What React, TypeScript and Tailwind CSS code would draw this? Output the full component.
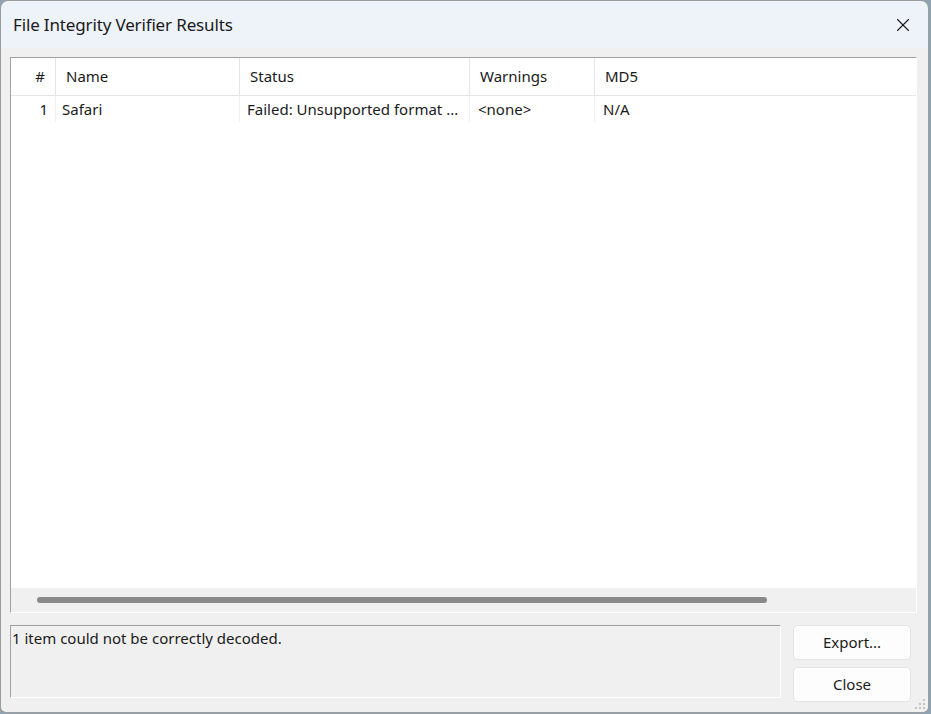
import { X } from "lucide-react"

const font = { fontFamily: '"Segoe UI", "Noto Sans", "Open Sans", sans-serif' }

const cols = [
  { label: "#", w: "w-[45px]", head: "justify-end pr-[10px]", cell: "justify-end pr-[7px]", value: "1" },
  { label: "Name", w: "w-[184px]", head: "pl-[10px]", cell: "pl-[6px]", value: "Safari" },
  { label: "Status", w: "w-[230px]", head: "pl-[10px]", cell: "pl-[7px]", value: "Failed: Unsupported format ..." },
  { label: "Warnings", w: "w-[125px]", head: "pl-[10px]", cell: "pl-[8px]", value: "<none>" },
  { label: "MD5", w: "flex-1", head: "pl-[10px]", cell: "pl-[8px]", value: "N/A" },
]

// size grip dots (bottom-right corner)
function SizeGrip() {
  return (
    <svg width="12" height="12" viewBox="0 0 12 12" className="absolute right-[2px] bottom-[2px]">
      <rect x="9" y="1" width="2" height="2" fill="#c4c4c4" />
      <rect x="5" y="5" width="2" height="2" fill="#c4c4c4" />
      <rect x="9" y="5" width="2" height="2" fill="#c4c4c4" />
      <rect x="1" y="9" width="2" height="2" fill="#c4c4c4" />
      <rect x="5" y="9" width="2" height="2" fill="#c4c4c4" />
      <rect x="9" y="9" width="2" height="2" fill="#c4c4c4" />
    </svg>
  )
}

export default function App() {
  return (
    <div className="w-[931px] h-[714px] bg-[#8fa3b3] overflow-hidden" style={font}>
      <div className="relative w-[929px] h-[713px] flex flex-col rounded-t-[8px] rounded-b-[6px] border border-[#9c9c9c] overflow-hidden">
        {/* title bar */}
        <div className="h-[47px] flex-shrink-0 bg-[#eef3f9] flex items-center justify-between pl-[12px] pr-[14px]">
          <span className="text-[17px] text-[#1a1a1a] tracking-[-0.15px]">File Integrity Verifier Results</span>
          <X size={22} strokeWidth={1.2} className="text-[#1a1a1a]" />
        </div>

        {/* body */}
        <div className="flex-1 bg-[#f0f0f0] flex flex-col pl-[9px] pr-[11px] pt-[9px] pb-[10px]">
          {/* list view */}
          <div className="h-[556px] flex flex-col border-l border-t border-[#a0a0a0] border-r border-r-white border-b border-b-white bg-white">
            <div className="h-[38px] flex border-b border-[#e5e5e5] text-[15px] text-[#1a1a1a]">
              {cols.map((c, i) => (
                <div
                  key={c.label}
                  className={`${c.w} flex items-center ${c.head} ${i < cols.length - 1 ? "border-r border-[#e5e5e5]" : ""}`}
                >
                  {c.label}
                </div>
              ))}
            </div>
            <div className="h-[26px] flex text-[15px] text-[#1a1a1a]">
              {cols.map((c, i) => (
                <div
                  key={c.label}
                  className={`${c.w} flex items-center whitespace-nowrap overflow-hidden ${c.cell} ${i < cols.length - 1 ? "border-r border-[#f0f0f0]" : ""}`}
                >
                  {c.value}
                </div>
              ))}
            </div>
            <div className="flex-1" />
            {/* horizontal scrollbar */}
            <div className="h-[24px] bg-[#f0f0f0] flex items-center pl-[26px]">
              <div className="w-[730px] h-[6px] rounded-full bg-[#8a8a8a]" />
            </div>
          </div>

          {/* bottom area */}
          <div className="flex mt-[12px] gap-[12px]">
            <div className="w-[771px] h-[73px] border-l border-t border-[#a0a0a0] border-r border-r-white border-b border-b-white px-[1px] pt-[1px] text-[15px] text-[#1a1a1a]">
              1 item could not be correctly decoded.
            </div>
            <div className="flex flex-col gap-[7px]">
              <button className="w-[118px] h-[35px] bg-[#fdfdfd] border border-[#e3e3e3] rounded-[4px] text-[15px] text-[#1a1a1a]">
                Export...
              </button>
              <button className="w-[118px] h-[35px] bg-[#fdfdfd] border border-[#e3e3e3] rounded-[4px] text-[15px] text-[#1a1a1a]">
                Close
              </button>
            </div>
          </div>
        </div>
        <SizeGrip />
      </div>
    </div>
  )
}
